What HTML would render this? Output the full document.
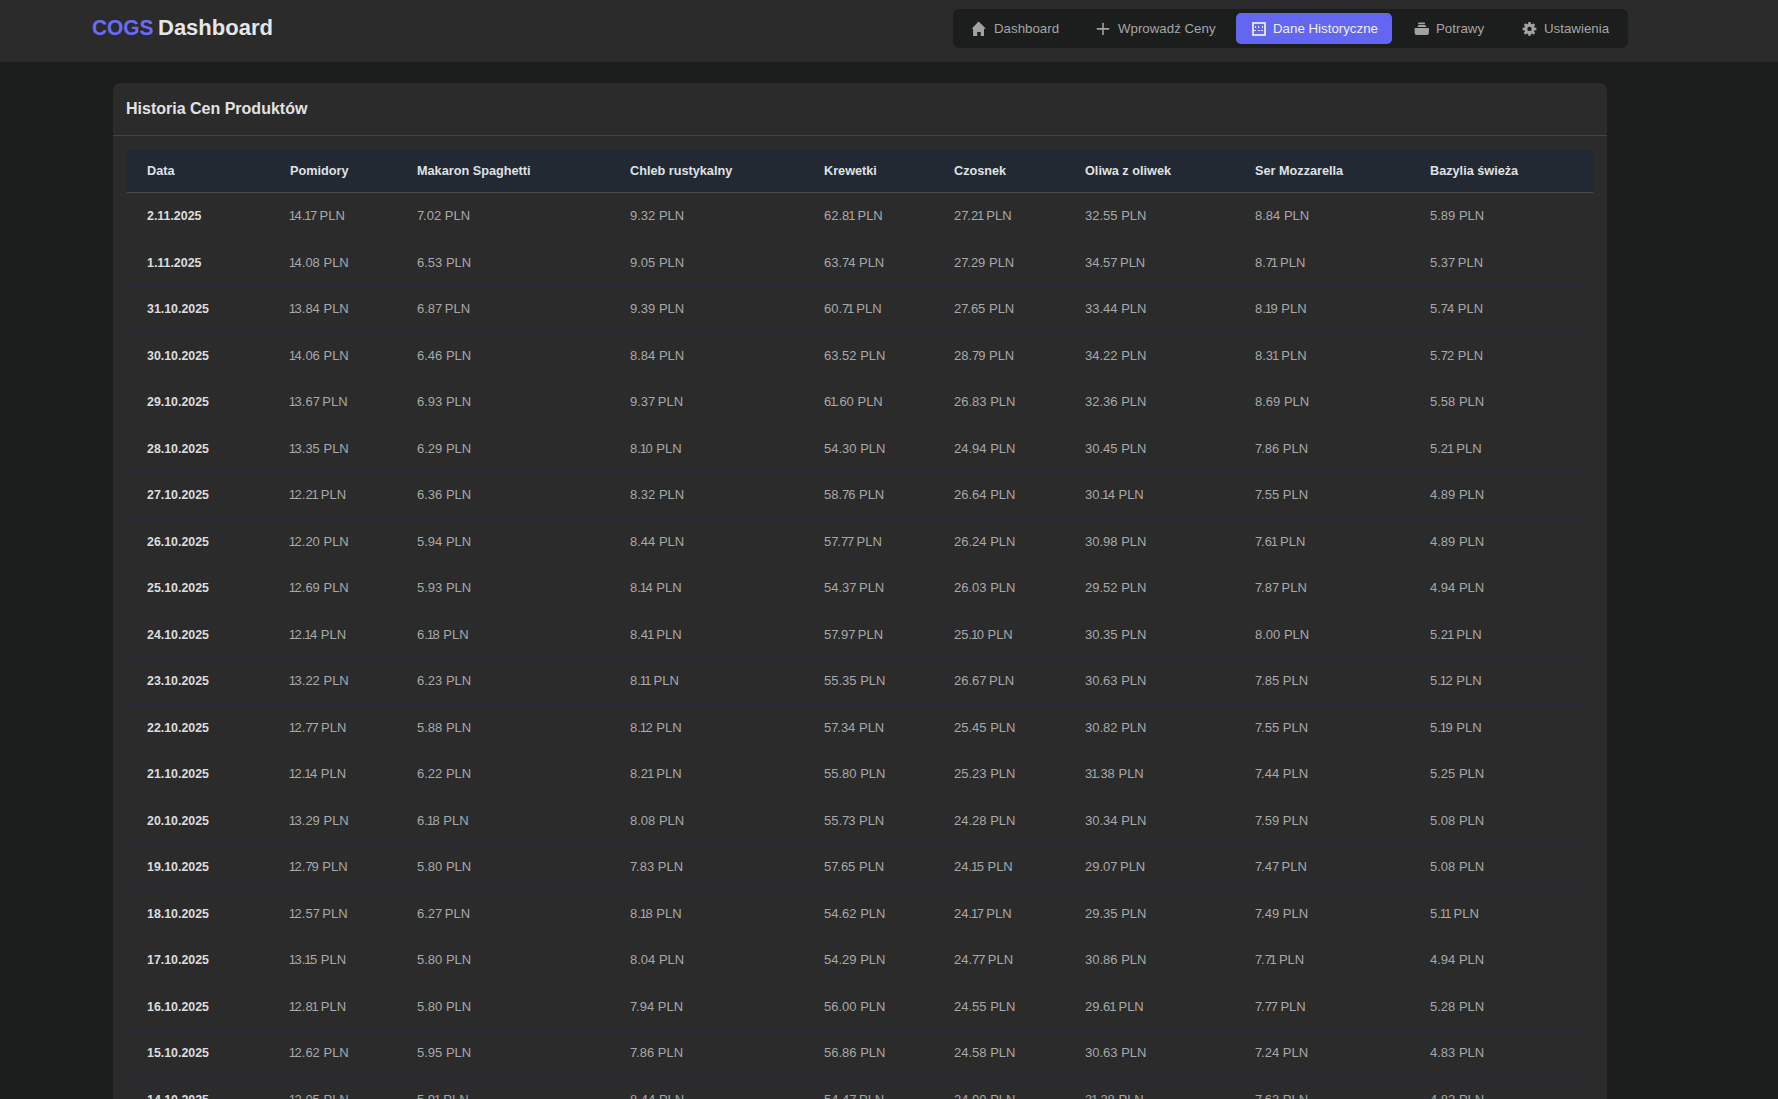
<!DOCTYPE html>
<html lang="pl">
<head>
<meta charset="utf-8">
<title>COGS Dashboard</title>
<style>
*{box-sizing:border-box;margin:0;padding:0}
html,body{width:1778px;height:1099px;overflow:hidden}
body{background:#1c1d1d;font-family:"Liberation Sans",sans-serif;position:relative}
.hdr{position:absolute;left:0;top:0;width:1778px;height:62px;background:#2b2b2b}
.logo{position:absolute;top:15px;font-size:22px;line-height:26px;font-weight:bold;color:#e6e6e6;white-space:nowrap}
.l1{left:92px;color:#6b6cf6;transform:scaleX(0.948);transform-origin:0 0}
.l2{left:158px}
.nav{position:absolute;left:953px;top:9px;width:675px;height:39px;background:#1c1d1d;border-radius:6px}
.act{position:absolute;left:1236px;top:13px;width:156px;height:31px;background:#6366f1;border-radius:5px}
.nt{position:absolute;top:21px;font-size:13.3px;line-height:16px;color:#a5a5a5;white-space:nowrap}
.nt.w{color:#f0f0f0}
.ic{position:absolute;left:0;top:0}
.card{position:absolute;left:113px;top:83px;width:1494px;height:1100px;background:#2b2b2b;border-radius:8px}
.ct{position:absolute;left:13px;top:17px;font-size:16px;font-weight:bold;color:#e2e2e2;white-space:nowrap}
.cl{position:absolute;left:0;top:52px;width:1494px;height:1px;background:#3f454c}
table{position:absolute;left:14px;top:67.3px;width:1466px;border-collapse:collapse;table-layout:fixed}
th{height:43px;background:#232932;text-align:left;padding:0 0 2px 20px;font-size:12.7px;font-weight:bold;color:#dfe1e4;box-shadow:inset 0 -1px 0 #46494f;white-space:nowrap}
td{height:46.5px;padding:14.5px 0 0 20px;vertical-align:baseline;font-size:13px;color:#a8a8a8;border-bottom:1px solid #232a35;white-space:nowrap}
td i{font-style:normal;margin:0 -1.5px 0 -1.2px}
td u{text-decoration:none;margin-right:-1.2px}
td.d{font-weight:bold;color:#dcdcdc;font-size:12.4px}
</style>
</head>
<body>
<div class="hdr">
  <div class="logo l1">COGS</div>
  <div class="logo l2">Dashboard</div>
  <div class="nav"></div>
  <div class="act"></div>
  <div class="nt" style="left:994px">Dashboard</div>
  <div class="nt" style="left:1118px">Wprowadź Ceny</div>
  <div class="nt w" style="left:1273px">Dane Historyczne</div>
  <div class="nt" style="left:1436px">Potrawy</div>
  <div class="nt" style="left:1544px">Ustawienia</div>
  <svg class="ic" width="1778" height="62" viewBox="0 0 1778 62">
    <path d="M978.6 21.6 L986 28.7 L984 28.7 L984 35.9 L980.7 35.9 L980.7 32 L977.2 32 L977.2 35.9 L973.1 35.9 L973.1 28.7 L971.6 28.7 Z" fill="#a2a2a2"/>
    <path d="M1103 22.7 V35 M1096.8 28.85 H1109.2" stroke="#a2a2a2" stroke-width="1.6"/>
    <rect x="1253" y="23" width="12" height="12" fill="none" stroke="#e8e8dc" stroke-width="1.8"/>
    <rect x="1255" y="26" width="1" height="2" fill="#e8e8dc"/>
    <rect x="1258" y="26" width="1" height="2" fill="#e8e8dc"/>
    <rect x="1262" y="26" width="1" height="2" fill="#e8e8dc"/>
    <rect x="1254" y="30" width="2" height="1" fill="#e8e8dc"/>
    <rect x="1258" y="30" width="2" height="1" fill="#e8e8dc"/>
    <rect x="1261" y="30" width="2" height="1" fill="#e8e8dc"/>
    <rect x="1418" y="22.6" width="7" height="1.6" rx="0.8" fill="#a2a2a2"/>
    <path d="M1417.5 27 L1418.2 25.6 Q1418.5 25.1 1419.2 25.1 L1424.6 25.1 Q1425.3 25.1 1425.7 25.6 L1426.6 27 Z" fill="#a2a2a2"/>
    <path d="M1414.6 28 H1428.9 V32.4 Q1428.9 34.9 1426.4 34.9 H1417.1 Q1414.6 34.9 1414.6 32.4 Z" fill="#a2a2a2"/>
    <g transform="translate(1529.5 28.9)"><path d="M-1.41 -5.00 L-1.23 -6.89 L1.23 -6.89 L1.41 -5.00 L2.54 -4.54 L4.00 -5.74 L5.74 -4.00 L4.54 -2.54 L5.00 -1.41 L6.89 -1.23 L6.89 1.23 L5.00 1.41 L4.54 2.54 L5.74 4.00 L4.00 5.74 L2.54 4.54 L1.41 5.00 L1.23 6.89 L-1.23 6.89 L-1.41 5.00 L-2.54 4.54 L-4.00 5.74 L-5.74 4.00 L-4.54 2.54 L-5.00 1.41 L-6.89 1.23 L-6.89 -1.23 L-5.00 -1.41 L-4.54 -2.54 L-5.74 -4.00 L-4.00 -5.74 L-2.54 -4.54 Z M2.2 0 A2.2 2.2 0 1 0 -2.2 0 A2.2 2.2 0 1 0 2.2 0 Z" fill-rule="evenodd" fill="#a2a2a2"/></g>
  </svg>
</div>
<div class="card">
  <div class="ct">Historia Cen Produktów</div>
  <div class="cl"></div>
  <table>
    <colgroup><col style="width:143px"><col style="width:127px"><col style="width:213px"><col style="width:194px"><col style="width:130px"><col style="width:131px"><col style="width:170px"><col style="width:175px"><col style="width:183px"></colgroup>
    <thead><tr><th>Data</th><th>Pomidory</th><th>Makaron Spaghetti</th><th>Chleb rustykalny</th><th>Krewetki</th><th>Czosnek</th><th>Oliwa z oliwek</th><th>Ser Mozzarella</th><th>Bazylia świeża</th></tr></thead>
    <tbody>
<tr><td class=d>2.11.2025</td><td><i>1</i>4.<i>1</i><u>7</u> PLN</td><td><u>7</u>.02 PLN</td><td>9.32 PLN</td><td>62.8<i>1</i> PLN</td><td>2<u>7</u>.2<i>1</i> PLN</td><td>32.55 PLN</td><td>8.84 PLN</td><td>5.89 PLN</td></tr>
<tr><td class=d>1.11.2025</td><td><i>1</i>4.08 PLN</td><td>6.53 PLN</td><td>9.05 PLN</td><td>63.<u>7</u>4 PLN</td><td>2<u>7</u>.29 PLN</td><td>34.5<u>7</u> PLN</td><td>8.<u>7</u><i>1</i> PLN</td><td>5.3<u>7</u> PLN</td></tr>
<tr><td class=d>31.10.2025</td><td><i>1</i>3.84 PLN</td><td>6.8<u>7</u> PLN</td><td>9.39 PLN</td><td>60.<u>7</u><i>1</i> PLN</td><td>2<u>7</u>.65 PLN</td><td>33.44 PLN</td><td>8.<i>1</i>9 PLN</td><td>5.<u>7</u>4 PLN</td></tr>
<tr><td class=d>30.10.2025</td><td><i>1</i>4.06 PLN</td><td>6.46 PLN</td><td>8.84 PLN</td><td>63.52 PLN</td><td>28.<u>7</u>9 PLN</td><td>34.22 PLN</td><td>8.3<i>1</i> PLN</td><td>5.<u>7</u>2 PLN</td></tr>
<tr><td class=d>29.10.2025</td><td><i>1</i>3.6<u>7</u> PLN</td><td>6.93 PLN</td><td>9.3<u>7</u> PLN</td><td>6<i>1</i>.60 PLN</td><td>26.83 PLN</td><td>32.36 PLN</td><td>8.69 PLN</td><td>5.58 PLN</td></tr>
<tr><td class=d>28.10.2025</td><td><i>1</i>3.35 PLN</td><td>6.29 PLN</td><td>8.<i>1</i>0 PLN</td><td>54.30 PLN</td><td>24.94 PLN</td><td>30.45 PLN</td><td><u>7</u>.86 PLN</td><td>5.2<i>1</i> PLN</td></tr>
<tr><td class=d>27.10.2025</td><td><i>1</i>2.2<i>1</i> PLN</td><td>6.36 PLN</td><td>8.32 PLN</td><td>58.<u>7</u>6 PLN</td><td>26.64 PLN</td><td>30.<i>1</i>4 PLN</td><td><u>7</u>.55 PLN</td><td>4.89 PLN</td></tr>
<tr><td class=d>26.10.2025</td><td><i>1</i>2.20 PLN</td><td>5.94 PLN</td><td>8.44 PLN</td><td>5<u>7</u>.<u>7</u><u>7</u> PLN</td><td>26.24 PLN</td><td>30.98 PLN</td><td><u>7</u>.6<i>1</i> PLN</td><td>4.89 PLN</td></tr>
<tr><td class=d>25.10.2025</td><td><i>1</i>2.69 PLN</td><td>5.93 PLN</td><td>8.<i>1</i>4 PLN</td><td>54.3<u>7</u> PLN</td><td>26.03 PLN</td><td>29.52 PLN</td><td><u>7</u>.8<u>7</u> PLN</td><td>4.94 PLN</td></tr>
<tr><td class=d>24.10.2025</td><td><i>1</i>2.<i>1</i>4 PLN</td><td>6.<i>1</i>8 PLN</td><td>8.4<i>1</i> PLN</td><td>5<u>7</u>.9<u>7</u> PLN</td><td>25.<i>1</i>0 PLN</td><td>30.35 PLN</td><td>8.00 PLN</td><td>5.2<i>1</i> PLN</td></tr>
<tr><td class=d>23.10.2025</td><td><i>1</i>3.22 PLN</td><td>6.23 PLN</td><td>8.<i>1</i><i>1</i> PLN</td><td>55.35 PLN</td><td>26.6<u>7</u> PLN</td><td>30.63 PLN</td><td><u>7</u>.85 PLN</td><td>5.<i>1</i>2 PLN</td></tr>
<tr><td class=d>22.10.2025</td><td><i>1</i>2.<u>7</u><u>7</u> PLN</td><td>5.88 PLN</td><td>8.<i>1</i>2 PLN</td><td>5<u>7</u>.34 PLN</td><td>25.45 PLN</td><td>30.82 PLN</td><td><u>7</u>.55 PLN</td><td>5.<i>1</i>9 PLN</td></tr>
<tr><td class=d>21.10.2025</td><td><i>1</i>2.<i>1</i>4 PLN</td><td>6.22 PLN</td><td>8.2<i>1</i> PLN</td><td>55.80 PLN</td><td>25.23 PLN</td><td>3<i>1</i>.38 PLN</td><td><u>7</u>.44 PLN</td><td>5.25 PLN</td></tr>
<tr><td class=d>20.10.2025</td><td><i>1</i>3.29 PLN</td><td>6.<i>1</i>8 PLN</td><td>8.08 PLN</td><td>55.<u>7</u>3 PLN</td><td>24.28 PLN</td><td>30.34 PLN</td><td><u>7</u>.59 PLN</td><td>5.08 PLN</td></tr>
<tr><td class=d>19.10.2025</td><td><i>1</i>2.<u>7</u>9 PLN</td><td>5.80 PLN</td><td><u>7</u>.83 PLN</td><td>5<u>7</u>.65 PLN</td><td>24.<i>1</i>5 PLN</td><td>29.0<u>7</u> PLN</td><td><u>7</u>.4<u>7</u> PLN</td><td>5.08 PLN</td></tr>
<tr><td class=d>18.10.2025</td><td><i>1</i>2.5<u>7</u> PLN</td><td>6.2<u>7</u> PLN</td><td>8.<i>1</i>8 PLN</td><td>54.62 PLN</td><td>24.<i>1</i><u>7</u> PLN</td><td>29.35 PLN</td><td><u>7</u>.49 PLN</td><td>5.<i>1</i><i>1</i> PLN</td></tr>
<tr><td class=d>17.10.2025</td><td><i>1</i>3.<i>1</i>5 PLN</td><td>5.80 PLN</td><td>8.04 PLN</td><td>54.29 PLN</td><td>24.<u>7</u><u>7</u> PLN</td><td>30.86 PLN</td><td><u>7</u>.<u>7</u><i>1</i> PLN</td><td>4.94 PLN</td></tr>
<tr><td class=d>16.10.2025</td><td><i>1</i>2.8<i>1</i> PLN</td><td>5.80 PLN</td><td><u>7</u>.94 PLN</td><td>56.00 PLN</td><td>24.55 PLN</td><td>29.6<i>1</i> PLN</td><td><u>7</u>.<u>7</u><u>7</u> PLN</td><td>5.28 PLN</td></tr>
<tr><td class=d>15.10.2025</td><td><i>1</i>2.62 PLN</td><td>5.95 PLN</td><td><u>7</u>.86 PLN</td><td>56.86 PLN</td><td>24.58 PLN</td><td>30.63 PLN</td><td><u>7</u>.24 PLN</td><td>4.83 PLN</td></tr>
<tr><td class=d>14.10.2025</td><td><i>1</i>2.05 PLN</td><td>5.9<i>1</i> PLN</td><td>8.44 PLN</td><td>54.4<u>7</u> PLN</td><td>24.00 PLN</td><td>3<i>1</i>.28 PLN</td><td><u>7</u>.63 PLN</td><td>4.82 PLN</td></tr>
    </tbody>
  </table>
</div>
</body>
</html>
